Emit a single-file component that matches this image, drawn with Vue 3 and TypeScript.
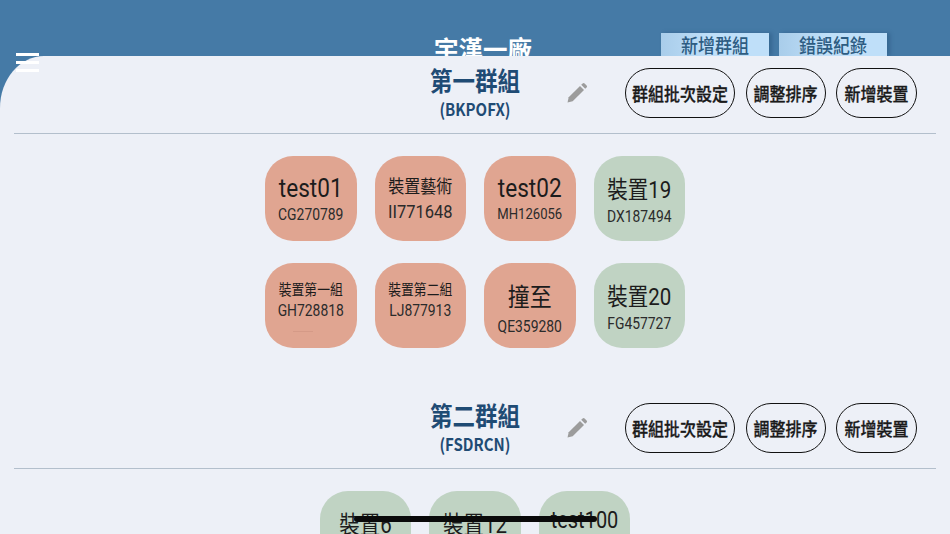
<script setup lang="ts">
interface Device {
  name: string
  code: string
  state: 'alert' | 'ok'
  size: 'xl' | 'lat' | 'latsm' | 'lg' | 'md' | 'sm'
  tight?: boolean
  smudge?: boolean
}
interface Group {
  title: string
  code: string
  devices: Device[]
}

const groups: Group[] = [
  {
    title: '第一群組',
    code: '(BKPOFX)',
    devices: [
      { name: 'test01', code: 'CG270789', state: 'alert', size: 'lat' },
      { name: '裝置藝術', code: 'II771648', state: 'alert', size: 'md' },
      { name: 'test02', code: 'MH126056', state: 'alert', size: 'lat', tight: true },
      { name: '裝置19', code: 'DX187494', state: 'ok', size: 'lg' },
      { name: '裝置第一組', code: 'GH728818', state: 'alert', size: 'sm', smudge: true },
      { name: '裝置第二組', code: 'LJ877913', state: 'alert', size: 'sm' },
      { name: '撞至', code: 'QE359280', state: 'alert', size: 'xl' },
      { name: '裝置20', code: 'FG457727', state: 'ok', size: 'lg' }
    ]
  },
  {
    title: '第二群組',
    code: '(FSDRCN)',
    devices: [
      { name: '裝置6', code: '', state: 'ok', size: 'lg' },
      { name: '裝置12', code: '', state: 'ok', size: 'lg' },
      { name: 'test100', code: '', state: 'ok', size: 'latsm' }
    ]
  }
]
const actions = ['群組批次設定', '調整排序', '新增裝置']
</script>

<template>
  <div class="app">
    <header class="topbar">
      <div class="plant">宇漢一廠</div>
      <nav class="tabs">
        <button class="tab"><span>新增群組</span></button>
        <button class="tab"><span>錯誤紀錄</span></button>
      </nav>
    </header>
    <main class="panel">
      <section v-for="group in groups" :key="group.code" class="group">
        <div class="group-head">
          <div></div>
          <div class="group-title">
            <h2>{{ group.title }}</h2>
            <p>{{ group.code }}</p>
          </div>
          <div class="group-tools">
            <svg class="pencil" viewBox="0 0 24 24" width="24" height="24">
              <path d="M2.5 21.5l1.2-5.2L15 5l4 4L7.7 20.3z" />
              <path d="M16.2 3.8l1.4-1.4a1.4 1.4 0 0 1 2 0l2 2a1.4 1.4 0 0 1 0 2l-1.4 1.4z" />
            </svg>
            <button v-for="action in actions" :key="action" class="action"><span>{{ action }}</span></button>
          </div>
        </div>
        <div class="devices">
          <div v-for="device in group.devices" :key="device.name" class="device" :class="[device.state, device.size, { tight: device.tight }]">
            <span class="name">{{ device.name }}</span>
            <span class="code">{{ device.code }}</span>
            <i v-if="device.smudge" class="smudge"></i>
          </div>
        </div>
      </section>
    </main>
    <div class="menu" aria-label="menu"><i></i><i></i><i></i></div>
    <div class="home-bar"></div>
  </div>
</template>

<style>
html, body { margin: 0; padding: 0; background: #457aa6; }
</style>

<style scoped>
.app {
  position: relative;
  width: 950px;
  height: 534px;
  overflow: hidden;
  display: flex;
  flex-direction: column;
  background: #457aa6;
  font-family: "Noto Sans CJK TC", "Noto Sans", sans-serif;
}
.topbar {
  position: relative;
  flex: 0 0 56px;
  overflow: hidden;
}
.plant {
  position: absolute;
  left: 0;
  right: 0;
  top: 32px;
  text-align: center;
  color: #fff;
  font-size: 24.5px;
  line-height: 34px;
  font-weight: 700;
  transform: translateX(8px);
}
.tabs {
  display: flex;
  justify-content: flex-end;
  gap: 10px;
  padding: 33px 63px 0 0;
}
.tab {
  width: 108px;
  height: 23px;
  padding: 0;
  border: 0;
  background: linear-gradient(90deg, #a9cdea 0%, #bfdff9 45%);
  box-shadow: 3px 0 4px rgba(30, 70, 110, 0.35);
  color: #2d5c82;
  font: 500 17px/23px "Noto Sans CJK TC", sans-serif;
}
.tab span {
  display: inline-block;
  transform: scaleY(1.15);
}
.panel {
  flex: 1;
  min-height: 0;
  background: #edf0f7;
  border-top-left-radius: 44px 52px;
}
.group {
  height: 335px;
}
.group-head {
  height: 78px;
  margin: 0 14px;
  box-sizing: border-box;
  border-bottom: 1px solid #b3bfcc;
  display: grid;
  grid-template-columns: 1fr auto 1fr;
  align-items: center;
}
.group-title {
  text-align: center;
  color: #1f4b74;
  transform: translateY(-4px);
}
.group-title h2 {
  margin: 0;
  font-size: 22.5px;
  line-height: 36px;
  font-weight: 700;
  transform: scaleY(1.16);
}
.group-title p {
  margin: 1px 0 0;
  font-size: 15px;
  line-height: 22px;
  font-weight: 700;
  transform: scaleY(1.15);
}
.group-tools {
  display: flex;
  align-items: center;
  justify-content: flex-end;
  gap: 10.5px;
  padding-right: 19px;
  transform: translateY(-2px);
}
.pencil {
  fill: #9c9c9c;
  margin-right: 25.5px;
}
.action {
  height: 50px;
  min-width: 80px;
  padding: 0 6px;
  box-sizing: border-box;
  border: 1.5px solid #111;
  border-radius: 25px;
  background: transparent;
  color: #1a1a1a;
  font: 500 16px/24px "Noto Sans CJK TC", sans-serif;
  -webkit-text-stroke: 0.25px #1a1a1a;
}
.action:last-child {
  min-width: 81px;
}
.action span {
  display: inline-block;
  transform: scaleY(1.15);
}
.devices {
  display: flex;
  flex-wrap: wrap;
  justify-content: center;
  gap: 22px 18px;
  width: 422px;
  margin: 22px auto 0;
}
.device {
  position: relative;
  width: 91.5px;
  height: 85px;
  box-sizing: border-box;
  border-radius: 28px;
  display: flex;
  flex-direction: column;
  align-items: center;
  justify-content: center;
  color: #1c1c1c;
  font-family: Roboto, "Noto Sans CJK TC", sans-serif;
}
.device.alert { background: #e0a591; }
.device.ok { background: #c0d3c3; }
.name, .code {
  white-space: nowrap;
  transform: scaleY(1.15);
}
.code {
  color: #2b2b2b;
  font-size: 13.9px;
  line-height: 20px;
  min-height: 20px;
}
.lat .name { font-size: 22.6px; line-height: 30px; }
.latsm { padding-bottom: 8px; }
.latsm .name { font-size: 20px; line-height: 30px; }
.lg { padding-top: 5px; }
.lg .name { font-size: 20.5px; line-height: 30px; }
.lg .code { line-height: 22px; min-height: 22px; }
.md .name { font-size: 16px; line-height: 26px; }
.md .code { font-size: 16.5px; line-height: 24px; }
.sm { padding-bottom: 11px; }
.sm .name { font-size: 12.8px; line-height: 20px; }
.xl { padding-top: 7px; }
.xl .name { font-size: 22px; line-height: 34px; }
.xl .code { line-height: 22px; }
.tight .code { font-size: 13.1px; }
.smudge {
  position: absolute;
  left: 28px;
  bottom: 16px;
  width: 20px;
  height: 1px;
  background: #d59a87;
}
.menu {
  position: absolute;
  left: 16px;
  top: 53px;
  width: 23px;
  display: flex;
  flex-direction: column;
  gap: 5px;
}
.menu i {
  display: block;
  height: 3px;
  background: #fff;
}
.home-bar {
  position: absolute;
  left: 354px;
  top: 516px;
  width: 243px;
  height: 6px;
  border-radius: 3px;
  background: #0a0a0a;
}
</style>
